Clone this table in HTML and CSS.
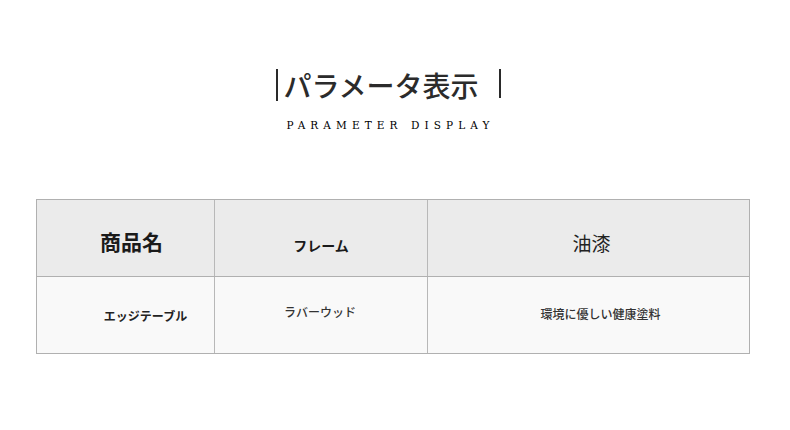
FILE: index.html
```html
<!DOCTYPE html>
<html lang="ja">
<head>
<meta charset="utf-8">
<link rel="stylesheet" href="styles.css">
</head>
<body>
<div class="page">
  <header class="heading">
    <h1 class="title"><span class="bar"></span><span class="title-text">パラメータ表示</span><span class="bar bar-right"></span></h1>
    <p class="subtitle">PARAMETER DISPLAY</p>
  </header>
  <div class="table">
    <div class="row head">
      <div class="cell c1"><span class="h-name">商品名</span></div>
      <div class="cell c2"><span class="h-frame">フレーム</span></div>
      <div class="cell c3"><span class="h-paint">油漆</span></div>
    </div>
    <div class="row body">
      <div class="cell c1"><span class="b-name">エッジテーブル</span></div>
      <div class="cell c2"><span class="b-frame">ラバーウッド</span></div>
      <div class="cell c3"><span class="b-paint">環境に優しい健康塗料</span></div>
    </div>
  </div>
</div>
</body>
</html>
```
FILE: styles.css
```css
* { box-sizing: border-box; }
html, body { margin: 0; padding: 0; background: #fff; }
body {
  width: 790px;
  height: 430px;
  overflow: hidden;
  font-family: "Noto Sans CJK JP", "Noto Sans", sans-serif;
  color: #222;
}
.page { padding-top: 65px; }
.heading { display: flex; flex-direction: column; align-items: center; }
.title {
  margin: 0;
  font-size: 28px;
  font-weight: 500;
  line-height: 40px;
  color: #2b2b2b;
  display: flex;
  align-items: center;
  padding-right: 13px;
}
.bar {
  display: inline-block;
  width: 2px;
  height: 32px;
  background: #2a2a2a;
  margin-right: 5px;
}
.bar-right { height: 29px; margin-left: 20px; margin-right: 0; margin-top: -3px; }
.subtitle {
  margin: 13px 0 0 0;
  font-family: "DejaVu Serif", "Liberation Serif", serif;
  font-size: 10.5px;
  letter-spacing: 5.1px;
  line-height: 14px;
  color: #000;
  padding-right: 9px;
}
.table {
  margin: 67px 0 0 36px;
  width: 714px;
  border: 1px solid #b0b0b0;
}
.row { display: flex; }
.row.head { background: #ebebeb; border-bottom: 1px solid #b0b0b0; height: 77px; }
.row.body { background: #f9f9f9; height: 76px; }
.cell { display: flex; align-items: center; justify-content: center; }
.c1 { width: 178px; border-right: 1px solid #b8b8b8; }
.c2 { width: 213px; border-right: 1px solid #b8b8b8; }
.c3 { flex: 1; }
.h-name { font-size: 21px; font-weight: 700; color: #1a1a1a; margin: 6px 0 0 12px; }
.h-frame { font-size: 14px; font-weight: 700; color: #1a1a1a; margin: 14px 0 0 0; }
.h-paint { font-size: 19px; font-weight: 400; color: #222; margin: 8px 0 0 6px; }
.b-name { font-size: 12px; font-weight: 700; color: #222; margin: 1px 0 0 40px; }
.b-frame { font-size: 12px; font-weight: 500; color: #333; margin: -7px 0 0 -2px; }
.b-paint { font-size: 12px; font-weight: 500; color: #333; margin: -4px 0 0 24px; }
```
